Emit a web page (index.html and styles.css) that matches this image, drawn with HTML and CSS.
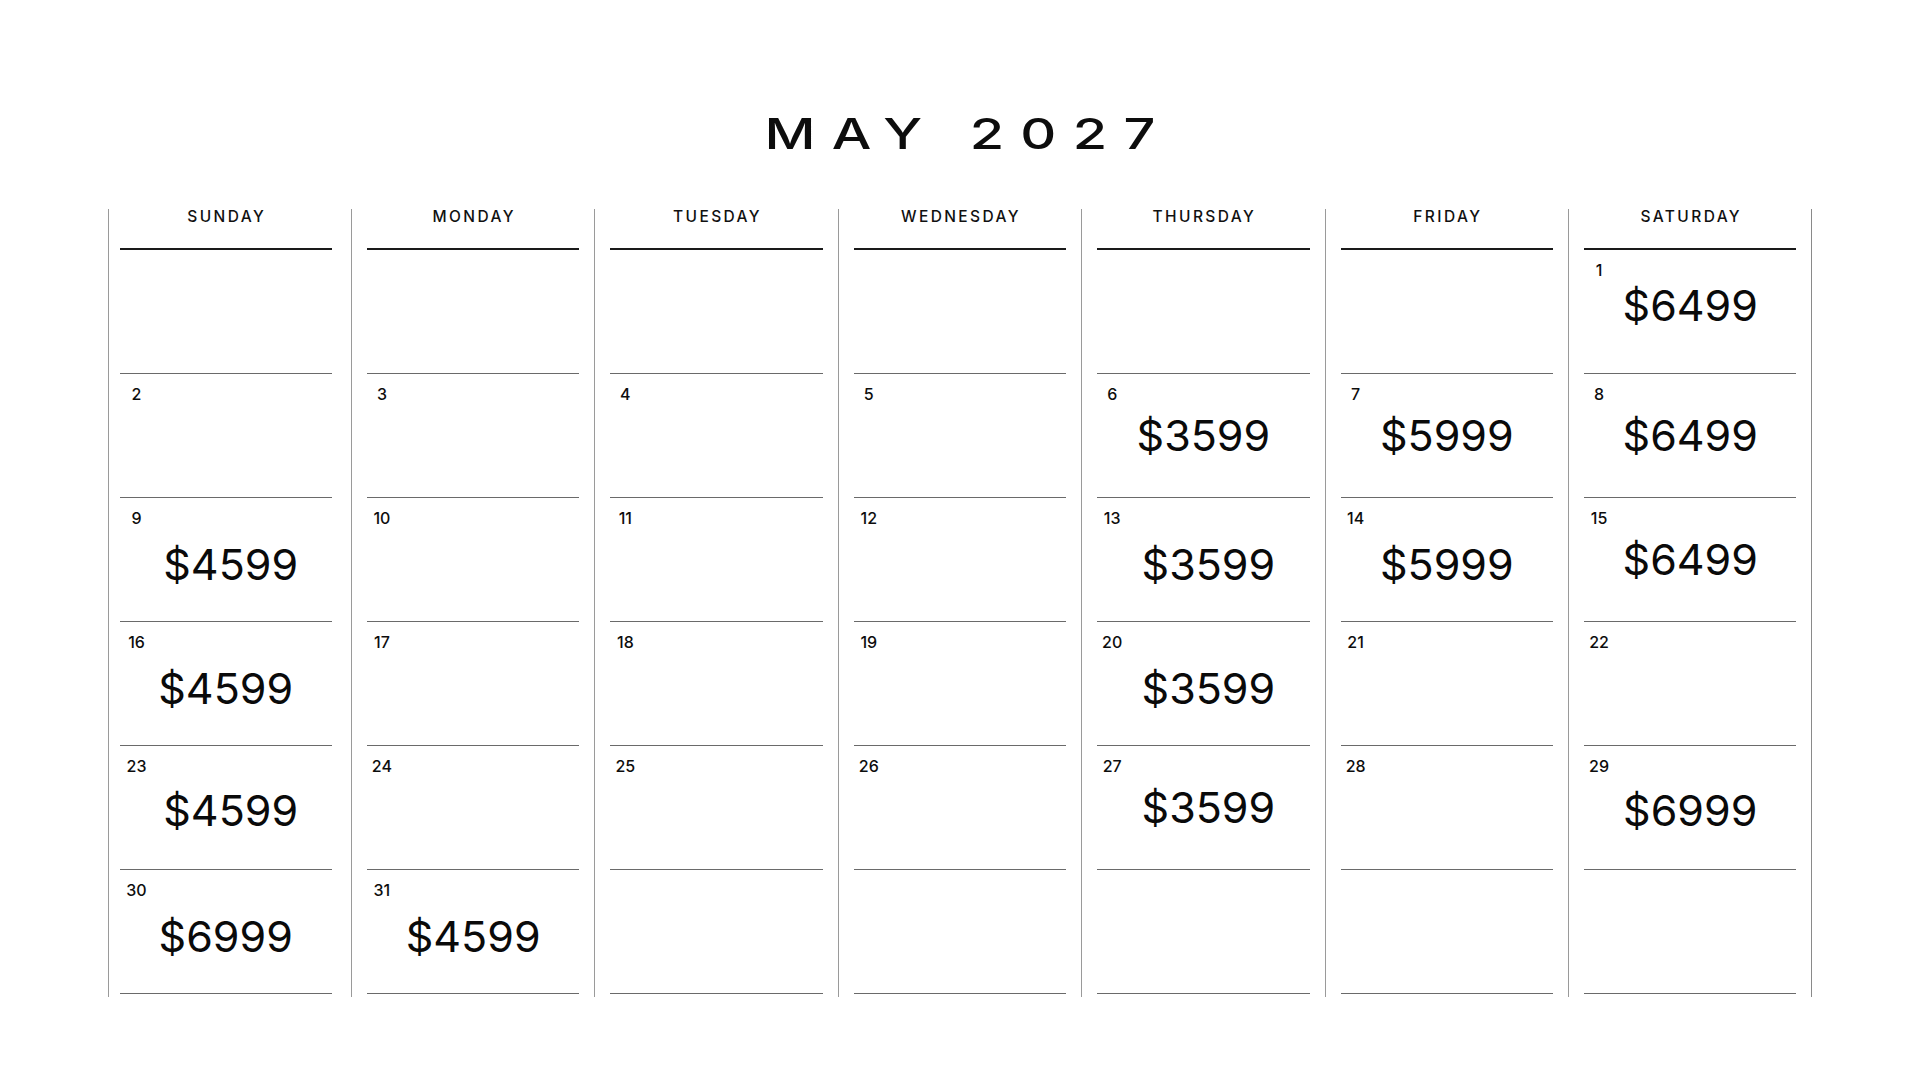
FILE: index.html
```html
<!DOCTYPE html>
<html lang="en">
<head>
<meta charset="utf-8">
<title>May 2027</title>
<link rel="stylesheet" href="styles.css">
</head>
<body>
<div class="page">
  <h1 class="title"><span class="title-text">MAY 2027</span></h1>
  <div class="calendar">
    <div class="col">
      <div class="dayname">SUNDAY</div>
      <div class="cell"></div>
      <div class="cell"><div class="num">2</div></div>
      <div class="cell"><div class="num">9</div><div class="price shift">$4599</div></div>
      <div class="cell"><div class="num">16</div><div class="price">$4599</div></div>
      <div class="cell"><div class="num">23</div><div class="price mid shift">$4599</div></div>
      <div class="cell"><div class="num">30</div><div class="price">$6999</div></div>
    </div>
    <div class="col">
      <div class="dayname">MONDAY</div>
      <div class="cell"></div>
      <div class="cell"><div class="num">3</div></div>
      <div class="cell"><div class="num">10</div></div>
      <div class="cell"><div class="num">17</div></div>
      <div class="cell"><div class="num">24</div></div>
      <div class="cell"><div class="num">31</div><div class="price">$4599</div></div>
    </div>
    <div class="col">
      <div class="dayname">TUESDAY</div>
      <div class="cell"></div>
      <div class="cell"><div class="num">4</div></div>
      <div class="cell"><div class="num">11</div></div>
      <div class="cell"><div class="num">18</div></div>
      <div class="cell"><div class="num">25</div></div>
      <div class="cell"></div>
    </div>
    <div class="col">
      <div class="dayname">WEDNESDAY</div>
      <div class="cell"></div>
      <div class="cell"><div class="num">5</div></div>
      <div class="cell"><div class="num">12</div></div>
      <div class="cell"><div class="num">19</div></div>
      <div class="cell"><div class="num">26</div></div>
      <div class="cell"></div>
    </div>
    <div class="col">
      <div class="dayname">THURSDAY</div>
      <div class="cell"></div>
      <div class="cell"><div class="num">6</div><div class="price hi">$3599</div></div>
      <div class="cell"><div class="num">13</div><div class="price shift">$3599</div></div>
      <div class="cell"><div class="num">20</div><div class="price shift">$3599</div></div>
      <div class="cell"><div class="num">27</div><div class="price hi shift">$3599</div></div>
      <div class="cell"></div>
    </div>
    <div class="col">
      <div class="dayname">FRIDAY</div>
      <div class="cell"></div>
      <div class="cell"><div class="num">7</div><div class="price hi">$5999</div></div>
      <div class="cell"><div class="num">14</div><div class="price">$5999</div></div>
      <div class="cell"><div class="num">21</div></div>
      <div class="cell"><div class="num">28</div></div>
      <div class="cell"></div>
    </div>
    <div class="col">
      <div class="dayname">SATURDAY</div>
      <div class="cell"><div class="num">1</div><div class="price top">$6499</div></div>
      <div class="cell"><div class="num">8</div><div class="price hi">$6499</div></div>
      <div class="cell"><div class="num">15</div><div class="price hi">$6499</div></div>
      <div class="cell"><div class="num">22</div></div>
      <div class="cell"><div class="num">29</div><div class="price mid">$6999</div></div>
      <div class="cell"></div>
    </div>
  </div>
</div>
</body>
</html>
```
FILE: styles.css
```css
* {
  box-sizing: border-box;
}

html, body {
  margin: 0;
  padding: 0;
  background: #ffffff;
}

body {
  width: 1920px;
  height: 1080px;
  overflow: hidden;
  font-family: "Inter", "Liberation Sans", sans-serif;
  color: #111111;
}

.page {
  padding-top: 112px;
}

.title {
  margin: 0;
  height: 43px;
  font-size: 43px;
  line-height: 43px;
  font-weight: 500;
  text-align: center;
  color: #0d0d0d;
}

.title-text {
  display: inline-block;
  letter-spacing: 12.5px;
  padding-left: 12.5px;
  transform: scaleX(1.3);
  transform-origin: center;
  white-space: pre;
}

.calendar {
  margin: 54px auto 0;
  width: 1705px;
  display: flex;
}

.col {
  flex: 1 1 0;
  border-left: 1px solid #9a9a9a;
  padding: 0 15px 3px;
  display: flex;
  flex-direction: column;
}

.col:first-child {
  padding: 0 19px 3px 11px;
}

.col:last-child {
  border-right: 1px solid #8a8a8a;
}

.dayname {
  height: 41px;
  border-bottom: 2px solid #1a1a1a;
  text-align: center;
  font-size: 15.5px;
  line-height: 16px;
  font-weight: 500;
  letter-spacing: 2.4px;
  padding-left: 2px;
  color: #111111;
}

.cell {
  height: 124px;
  border-bottom: 1px solid #6a6a6a;
  padding-top: 12px;
  display: flex;
  flex-direction: column;
}

.num {
  width: 30px;
  text-align: center;
  font-size: 16px;
  line-height: 16px;
  font-weight: 500;
  color: #0d0d0d;
}

.col:first-child .num {
  width: 34px;
}

.price {
  margin-top: 17px;
  text-align: center;
  font-size: 43px;
  line-height: 43px;
  font-weight: 400;
  color: #0a0a0a;
}

.price.mid {
  margin-top: 15px;
}

.price.hi {
  margin-top: 12px;
}

.price.top {
  margin-top: 6px;
}

.price.shift {
  padding-left: 10px;
}
```
